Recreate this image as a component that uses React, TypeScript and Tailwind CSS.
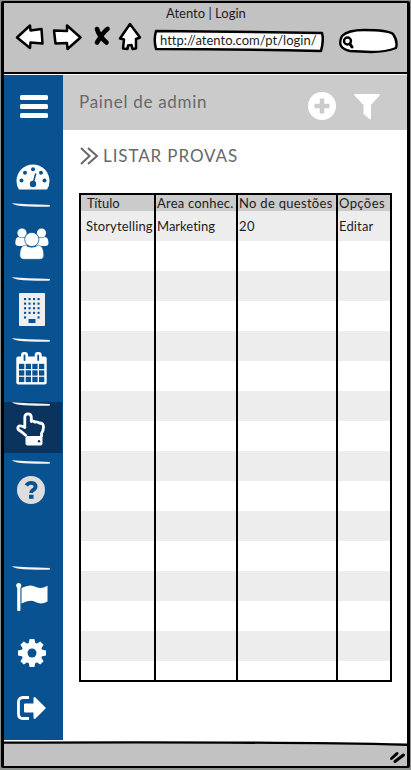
import React from "react";

type IconProps = { className?: string };

const ink = { stroke: "#000", strokeLinecap: "round", strokeLinejoin: "round" } as const;

function BrowserArrows() {
  return (
    <svg className="h-[36px] w-[130px] shrink-0" viewBox="14 20 130 36" {...ink} strokeWidth="2.500" fill="#fff">
      <path d="M17 37.5 L30 25.5 L30.5 30.5 L41.5 29 L42.5 43.5 L30.5 42.5 L30 48 Z" />
      <path d="M54 30.5 L67 31 L67 25.5 L80.5 37.5 L67.5 49 L67 43 L55.5 43.5 Z" />
      <path d="M97 29 Q99 36 106.500 42.500 M107.500 29 Q104 31 97 42.500" strokeWidth="4.600" fill="none" />
      <path d="M130 24 L140 37.5 L136 39 L136 48.5 L132.5 49 L131.5 45 L128 45.5 L127.5 49 L123 48.5 L124 39.5 L120 38.5 Z" />
    </svg>
  );
}

function Stroke({ className = "" }: IconProps) {
  return (
    <svg className={"block h-[5px] w-[38px] shrink-0 " + className} viewBox="0 0 38 5">
      <path d="M0 0.300 Q14 1.300 38 2 L37.500 3.800 Q17 4 7 2.700 Q1 1.800 0 0.300Z" fill="#f3f3f3" />
    </svg>
  );
}

function Gauge() {
  return (
    <svg className="block h-[26px] w-[34px]" viewBox="0 0 34 26">
      <path d="M3 25.5 Q.5 22 .5 17 A16.5 16.5 0 0 1 33.5 17 Q33.5 22 31 25.5Z" fill="#fff" />
      <g fill="#095292">
        <circle cx="5.5" cy="16.5" r="2" /><circle cx="9" cy="8.7" r="2" /><circle cx="17" cy="5.3" r="2" />
        <circle cx="25" cy="8.7" r="2" /><circle cx="28.5" cy="16.5" r="2" /><circle cx="17" cy="20" r="3.2" />
      </g>
      <path d="M17.2 19 L19.6 10" stroke="#095292" strokeWidth="1.5" strokeLinecap="round" />
    </svg>
  );
}

function People() {
  return (
    <svg className="block h-[32px] w-[34px]" viewBox="0 0 34 32" fill="#fff">
      <circle cx="7" cy="5" r="4.6" /><circle cx="26.5" cy="5" r="4.6" />
      <path d="M.3 15 Q.5 9 3.5 9 Q7 11 11 9 L12 18 H4 Q.3 18 .3 15Z M33.5 15 Q33.300 9 30 9 Q26 11 23 9 L21 18 H30 Q33.500 18 33.500 15Z" />
      <path d="M10 17 Q16.800 21.500 23.500 17 Q28.800 18 28.800 27 Q28.800 31.300 24.800 31.300 H8.800 Q4.800 31.300 4.800 27 Q4.800 18 10 17Z" stroke="#095292" strokeWidth=".6" />
      <circle cx="16.800" cy="11.500" r="7.100" stroke="#095292" strokeWidth=".8" />
    </svg>
  );
}

function Building() {
  const rows = [5, 9.6, 14.2, 18.8, 23.4];
  const cols = [5, 9.5, 14, 18.500];
  return (
    <svg className="block h-[33px] w-[26px]" viewBox="0 0 26 33">
      <rect width="26" height="33" rx="1" fill="#eee" />
      {rows.map((y, r) =>
        cols.map((x, c) =>
          r === 4 && (c === 1 || c === 2) ? null : <rect key={`${x}-${y}`} x={x} y={y} width="2.100" height="2.100" fill="#095292" />
        )
      )}
      <rect x="9.500" y="26" width="7" height="4" fill="#095292" />
    </svg>
  );
}

function Calendar() {
  return (
    <svg className="block h-[34px] w-[31px]" viewBox="0 0 31 34">
      <rect x=".3" y="5.500" width="30.400" height="28" rx="2" fill="#fff" />
      <rect x="5" y="1" width="7" height="9" rx="3" fill="#fff" />
      <rect x="18.700" y="1" width="7" height="9" rx="3" fill="#fff" />
      <path d="M8.500 4.500 V9 M22.200 4.500 V9" stroke="#095292" strokeWidth="1.800" strokeLinecap="round" />
      <g fill="#095292">
        {[12.800, 19.300, 25.800].map((y) => [3, 9.700, 16.300, 23].map((x) => <rect key={`${x}-${y}`} x={x} y={y} width="5.300" height="5.300" />))}
      </g>
    </svg>
  );
}

function Hand() {
  return (
    <svg className="block h-[34px] w-[30px]" viewBox="0 0 30 34">
      <path d="M10.500 24 Q6 20 2.500 17.800 Q.8 15.800 3 14 Q5.500 13.500 8.800 15.500 V5 Q9 1.800 12 1.800 Q15 1.800 15.300 5 V9.500 Q17.500 8.600 19 10.200 Q21.500 9.300 23 11 Q27.500 10.800 27.500 15 Q27.500 18.500 25.500 21.500 V25" fill="none" stroke="#fff" strokeWidth="2.800" strokeLinejoin="round" />
      <rect x="9.500" y="24" width="17" height="9.500" rx="2" fill="#fff" />
      <circle cx="23" cy="29.300" r="1.200" fill="#0a345d" />
    </svg>
  );
}

function Help() {
  return (
    <svg className="block h-[28px] w-[28px]" viewBox="0 0 28 28">
      <circle cx="14" cy="14" r="14" fill="#ddd" />
      <path d="M9.300 9.600 Q11 6.800 14.200 6.900 Q18.800 7.300 18.600 10.800 Q18.300 13 15.800 14.200 Q14.200 15.200 14.200 17" fill="none" stroke="#095292" strokeWidth="3.800" />
      <rect x="12" y="18.800" width="4.500" height="4" fill="#095292" />
    </svg>
  );
}

function Flag() {
  return (
    <svg className="block h-[28px] w-[32px]" viewBox="0 0 32 28" fill="#fff">
      <circle cx="2.700" cy="2.500" r="2.500" />
      <rect x="1.200" y="2" width="3.200" height="26" rx=".8" />
      <path d="M5.500 5 Q14 .5 20 4 Q25 6.500 31.500 2.800 V18.500 Q25 22 19.500 19 Q14 16 5.500 20.500Z" />
    </svg>
  );
}

function Gear() {
  return (
    <svg className="block h-[28px] w-[28px]" viewBox="0 0 28 28">
      <circle cx="14" cy="14" r="10.500" fill="#fff" />
      {[0, 45, 90, 135].map((a) => (
        <path key={a} d="M11.600 0 H16.400 L17.500 5 V23 L16.400 28 H11.600 L10.500 23 V5Z" fill="#fff" transform={`rotate(${a} 14 14)`} />
      ))}
      <circle cx="14" cy="14" r="4.500" fill="#095292" />
    </svg>
  );
}

function Exit() {
  return (
    <svg className="block h-[24px] w-[30px]" viewBox="0 0 30 24">
      <path d="M12 1.500 H6 Q1.500 1.500 1.500 6 V18 Q1.500 22.500 6 22.500 H12" fill="none" stroke="#fff" strokeWidth="2.800" />
      <path d="M8 7.500 H16.500 V2 Q17 .5 18.500 1.500 L28.500 11.500 Q29 12 28.500 12.500 L18.500 22.500 Q17 23.500 16.500 22 V16.500 H8 Q7 16.500 7 15.500 V8.500 Q7 7.500 8 7.500Z" fill="#fff" />
    </svg>
  );
}

const stripes = Array.from({ length: 15 }, (_, i) => i);

export default function App() {
  return (
    <div className="h-[770px] w-[411px] overflow-hidden bg-[#8d928f] pt-px pr-px pb-[2px] pl-px font-['Lato','Liberation_Sans',sans-serif] text-[13px] text-[#1c1c1c]">
      <div className="flex h-full flex-col overflow-hidden rounded-[2px] border-x-3 border-y-2 border-black bg-white">
        <header className="h-[71px] shrink-0 border-b-2 border-black bg-[#c2c2c2]">
          <div className="h-[20px] pt-[2px] pl-[162px] leading-[16px] tracking-[0.010px] whitespace-pre">Atento | Login</div>
          <div className="-mt-[3px] flex items-start pl-[10px]">
            <BrowserArrows />
            <div className="relative mt-[9px] ml-[8px] h-[24px] w-[172px] shrink-0">
              <svg className="absolute inset-0 h-full w-full" viewBox="152 29 172 24" {...ink} strokeWidth="2.500" fill="#fff">
                <path d="M156 31 Q240 31.500 322 33 Q324 40 321 51 Q230 49 156 49 Q153.500 40 156 31Z" />
              </svg>
              <span className="relative block pt-[3px] pl-[8px] leading-[16px] tracking-[0.010px]">http://atento.com/pt/login/</span>
            </div>
            <svg className="mt-[7px] ml-[13px] h-[28px] w-[62px] shrink-0" viewBox="337 27 62 28" {...ink} strokeWidth="2.400" fill="#fff">
              <path d="M342 36 Q348 30 364 30 Q388 30 393 34 Q398 41 396 48 Q386 52 371 52 L350 51 Q336 48 342 36Z" />
              <circle cx="347.500" cy="41" r="3.500" />
              <path d="M350 44 L352 47" strokeWidth="3" />
            </svg>
          </div>
        </header>

        <div className="flex h-[667px] shrink-0 pt-px">
          <nav className="flex h-[665px] w-[59px] shrink-0 flex-col items-center bg-[#095292]">
            <div className="mt-[20px] ml-px flex w-[28px] shrink-0 flex-col gap-[4px]">
              <i className="h-[5px] rounded-[1.500px] bg-white" />
              <i className="h-[5px] rounded-[1.500px] bg-white" />
              <i className="h-[5px] rounded-[1.500px] bg-white" />
            </div>
            <div className="mt-[46px] -ml-px"><Gauge /></div>
            <Stroke className="mt-[13px] -ml-[5px]" />
            <div className="mt-[20px] -ml-[4px]"><People /></div>
            <Stroke className="mt-[17px] -ml-[5px]" />
            <div className="mt-[11px] -ml-[3px]"><Building /></div>
            <Stroke className="mt-[12px] -ml-[5px]" />
            <div className="mt-[8px] -ml-[5px]"><Calendar /></div>
            <div className="mt-[17px] flex h-[51px] w-[58px] shrink-0 flex-col items-center self-start bg-[#0a345d]">
              <Stroke className="-ml-[4px]" />
              <div className="mt-[5px] -ml-[4px]"><Hand /></div>
            </div>
            <Stroke className="mt-[7px] -ml-[5px]" />
            <div className="mt-[11px] -ml-[5px]"><Help /></div>
            <Stroke className="mt-[62px] -ml-[5px]" />
            <div className="mt-[12px] -ml-[3px]"><Flag /></div>
            <div className="mt-[28px] -ml-[3px]"><Gear /></div>
            <div className="mt-[29px] -ml-[4px]"><Exit /></div>
          </nav>

          <main className="min-w-0 flex-1">
            <div className="flex h-[55px] items-start bg-[#cbcbcb] text-[17px] text-[#686868]">
              <h1 className="mt-[17px] ml-[16px] w-[229px] shrink-0 leading-[20px] tracking-[0.700px]">Painel de admin</h1>
              <svg className="mt-[17px] h-[28px] w-[28px] shrink-0" viewBox="0 0 28 28">
                <circle cx="14" cy="14" r="14" fill="#fff" />
                <path d="M14 6.500 V21.500 M6.500 14 H21.500" stroke="#cbcbcb" strokeWidth="4.500" />
              </svg>
              <svg className="mt-[19px] ml-[18px] h-[26px] w-[26px] shrink-0" viewBox="0 0 26 26">
                <path d="M.5 0 H25.500 Q26 1 25.500 1.500 L17 11 V24.500 Q16.500 26 15.500 25 L9.500 20 V11 L.5 1.500 Q0 1 .5 0Z" fill="#fff" />
              </svg>
            </div>
            <div className="flex items-start pt-[16px] pl-[17px] text-[#686868]">
              <svg className="mt-px h-[18px] w-[19px]" viewBox="0 0 19 18" fill="none" stroke="#686868" strokeWidth="2">
                <path d="M1 1 L9.500 9 L1 17 M8 1 L17 9 L8 17" />
              </svg>
              <h2 className="ml-[4px] text-[17px] leading-[20px] tracking-[0.900px]">LISTAR PROVAS</h2>
            </div>
            <table className="mt-[27px] ml-[16px] h-[489px] w-[313px] table-fixed border-collapse border-2 border-black text-[13px] leading-[15px]">
              <colgroup>
                <col className="w-[75px]" /><col className="w-[82px]" /><col className="w-[100px]" /><col />
              </colgroup>
              <thead>
                <tr className="h-[17px] bg-[#cbcbcb] text-left">
                  <th className="border-x-2 border-black p-0 pl-[6px] font-normal tracking-[0.010px]">Título</th>
                  <th className="border-x-2 border-black p-0 pl-px font-normal whitespace-nowrap tracking-[0.200px]">Area conhec.</th>
                  <th className="border-x-2 border-black p-0 pl-px font-normal whitespace-nowrap tracking-[0.300px]">No de questões</th>
                  <th className="border-x-2 border-black p-0 pl-px font-normal tracking-[0.400px]">Opções</th>
                </tr>
              </thead>
              <tbody>
                <tr className="h-[30px] bg-[#ededed] tracking-[0.150px]">
                  <td className="border-x-2 border-black p-0 pl-[5px] whitespace-nowrap">Storytelling</td>
                  <td className="border-x-2 border-black p-0 pl-px tracking-[0.010px]">Marketing</td>
                  <td className="border-x-2 border-black p-0 pl-px tracking-[0.500px]">20</td>
                  <td className="border-x-2 border-black p-0 pl-px">Editar</td>
                </tr>
                {stripes.map((i) => (
                  <tr key={i} className={i === 14 ? "h-[20px]" : i % 2 ? "h-[30px] bg-[#ededed]" : "h-[30px]"}>
                    {[0, 1, 2, 3].map((c) => (
                      <td key={c} className="border-x-2 border-black p-0" />
                    ))}
                  </tr>
                ))}
              </tbody>
            </table>
          </main>
        </div>

        <footer className="min-h-0 flex-1 bg-[#c2c2c2]">
          <svg className="block h-full w-full" viewBox="4 741 403 25" preserveAspectRatio="none">
            <path d="M4 741 H408 V744 Q270 741 4 742Z" fill="#fff" />
            <path d="M3 742.700 Q270 741.500 409 744.800" fill="none" stroke="#000" strokeWidth="2.300" />
            <path d="M391.500 758.500 L397 753.500 M395 761.500 L403.500 755" {...ink} strokeWidth="3" />
          </svg>
        </footer>
      </div>
    </div>
  );
}
